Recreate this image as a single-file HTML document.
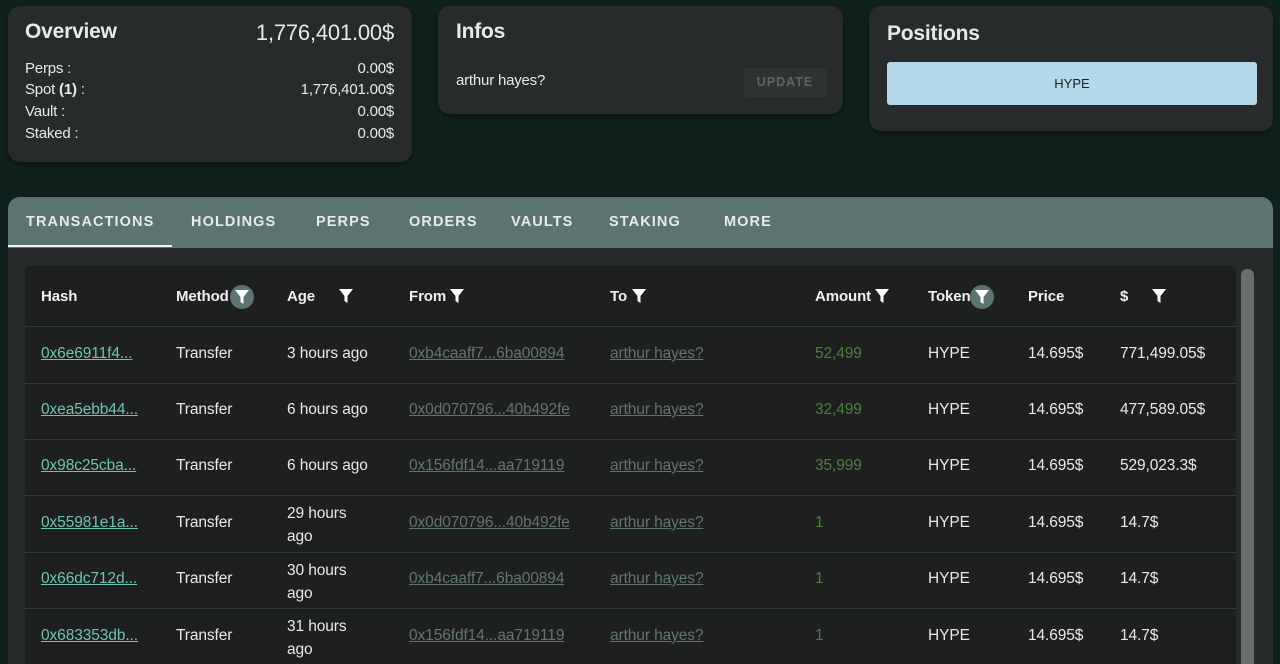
<!DOCTYPE html>
<html><head><meta charset="utf-8"><style>
*{box-sizing:border-box;margin:0;padding:0}
html,body{width:1280px;height:664px;overflow:hidden}
body{background:#0f201d;font-family:"Liberation Sans",sans-serif;color:#e8eaea;position:relative}
.card{position:absolute;background:#272b2b;border-radius:12px;box-shadow:0 2px 4px rgba(0,0,0,.4)}
.a{position:absolute;white-space:nowrap}
.h{font-size:21px;font-weight:bold;letter-spacing:-.2px}
.s{font-size:15px;letter-spacing:-.2px}
.tab{position:absolute;top:214px;font-size:14.5px;letter-spacing:1.1px;font-weight:bold;color:#e6eceb}
.c{position:absolute;font-size:15.5px;letter-spacing:-.1px;white-space:nowrap}
.hd{font-weight:bold;color:#f0f0f0;font-size:15px}
.lk{text-decoration:underline}
.hash{color:#6fc3b3}
.ad{color:#61766f}
.am{color:#4d7e3d}
.line{position:absolute;left:25px;width:1211px;height:1px;background:#333838}
.f{position:absolute;width:16px;height:18px}
</style></head><body>
<div class="card" style="left:8px;top:6px;width:404px;height:156px"></div>
<div class="a h" style="left:25px;top:20px">Overview</div>
<div class="a h" style="right:886px;top:20px;font-weight:normal;font-size:22px">1,776,401.00$</div>
<div class="a s" style="left:25px;top:60px">Perps :</div>
<div class="a s" style="left:25px;top:81px">Spot <b>(1)</b> :</div>
<div class="a s" style="left:25px;top:103px">Vault :</div>
<div class="a s" style="left:25px;top:125px">Staked :</div>
<div class="a s" style="right:886px;top:60px">0.00$</div>
<div class="a s" style="right:886px;top:81px">1,776,401.00$</div>
<div class="a s" style="right:886px;top:103px">0.00$</div>
<div class="a s" style="right:886px;top:125px">0.00$</div>

<div class="card" style="left:438px;top:6px;width:405px;height:108px"></div>
<div class="a h" style="left:456px;top:20px">Infos</div>
<div class="a s" style="left:456px;top:72px">arthur hayes?</div>
<div class="a" style="left:744px;top:68px;width:82px;height:29px;background:#2e3333;border-radius:3px;color:#5d6564;font-size:12.5px;letter-spacing:1px;text-align:center;line-height:29px;font-weight:bold">UPDATE</div>

<div class="card" style="left:869px;top:6px;width:404px;height:125px"></div>
<div class="a h" style="left:887px;top:22px">Positions</div>
<div class="a" style="left:887px;top:62px;width:370px;height:43px;background:#b3d8ea;border-radius:3px;color:#1a2228;font-size:13px;text-align:center;line-height:43px">HYPE</div>

<div class="a" style="left:8px;top:197px;width:1265px;height:467px;background:#262a2a;border-radius:12px 12px 0 0;overflow:hidden">
  <div style="position:absolute;left:0;top:0;width:100%;height:51px;background:#5b7471"></div>
  <div style="position:absolute;left:0;top:48px;width:164px;height:2px;background:#eef"></div>
  <div style="position:absolute;left:17px;top:69px;width:1211px;height:420px;background:#1e2020;border-radius:6px"></div>
  <div style="position:absolute;left:1233px;top:72px;width:13px;height:400px;background:#6b6e6e;border-radius:6px"></div>
</div>
<div class="tab" style="left:26px">TRANSACTIONS</div>
<div class="tab" style="left:191px">HOLDINGS</div>
<div class="tab" style="left:316px">PERPS</div>
<div class="tab" style="left:409px">ORDERS</div>
<div class="tab" style="left:511px">VAULTS</div>
<div class="tab" style="left:609px">STAKING</div>
<div class="tab" style="left:724px">MORE</div>

<svg width="0" height="0" style="position:absolute"><defs><symbol id="fi" viewBox="0 0 16 18"><path d="M1 2h14l-5.5 7v7l-3-2V9z" fill="#fff"/></symbol></defs></svg>

<div class="c hd" style="left:41px;top:288px">Hash</div>
<div class="c hd" style="left:176px;top:288px">Method</div>
<div style="position:absolute;left:230px;top:285px;width:24px;height:24px;border-radius:50%;background:#5b7471"></div>
<svg class="f" style="left:234px;top:288px"><use href="#fi"/></svg>
<div class="c hd" style="left:287px;top:288px">Age</div>
<svg class="f" style="left:338px;top:287px"><use href="#fi"/></svg>
<div class="c hd" style="left:409px;top:288px">From</div>
<svg class="f" style="left:449px;top:287px"><use href="#fi"/></svg>
<div class="c hd" style="left:610px;top:288px">To</div>
<svg class="f" style="left:631px;top:287px"><use href="#fi"/></svg>
<div class="c hd" style="left:815px;top:288px">Amount</div>
<svg class="f" style="left:874px;top:287px"><use href="#fi"/></svg>
<div class="c hd" style="left:928px;top:288px">Token</div>
<div style="position:absolute;left:970px;top:285px;width:24px;height:24px;border-radius:50%;background:#5b7471"></div>
<svg class="f" style="left:974px;top:288px"><use href="#fi"/></svg>
<div class="c hd" style="left:1028px;top:288px">Price</div>
<div class="c hd" style="left:1120px;top:288px">$</div>
<svg class="f" style="left:1151px;top:287px"><use href="#fi"/></svg>

<div class="line" style="top:326px"></div>
<div class="line" style="top:383px"></div>
<div class="line" style="top:439px"></div>
<div class="line" style="top:495px"></div>
<div class="line" style="top:552px"></div>
<div class="line" style="top:608px"></div>

<div class="c lk hash" style="left:41px;top:345px">0x6e6911f4...</div><div class="c" style="left:176px;top:345px">Transfer</div><div class="c" style="left:287px;top:345px">3 hours ago</div><div class="c lk ad" style="left:409px;top:345px">0xb4caaff7...6ba00894</div><div class="c lk ad" style="left:610px;top:345px">arthur hayes?</div><div class="c am" style="left:815px;top:345px">52,499</div><div class="c" style="left:928px;top:345px">HYPE</div><div class="c" style="left:1028px;top:345px">14.695$</div><div class="c" style="left:1120px;top:345px">771,499.05$</div>

<div class="c lk hash" style="left:41px;top:401px">0xea5ebb44...</div><div class="c" style="left:176px;top:401px">Transfer</div><div class="c" style="left:287px;top:401px">6 hours ago</div><div class="c lk ad" style="left:409px;top:401px">0x0d070796...40b492fe</div><div class="c lk ad" style="left:610px;top:401px">arthur hayes?</div><div class="c am" style="left:815px;top:401px">32,499</div><div class="c" style="left:928px;top:401px">HYPE</div><div class="c" style="left:1028px;top:401px">14.695$</div><div class="c" style="left:1120px;top:401px">477,589.05$</div>

<div class="c lk hash" style="left:41px;top:457px">0x98c25cba...</div><div class="c" style="left:176px;top:457px">Transfer</div><div class="c" style="left:287px;top:457px">6 hours ago</div><div class="c lk ad" style="left:409px;top:457px">0x156fdf14...aa719119</div><div class="c lk ad" style="left:610px;top:457px">arthur hayes?</div><div class="c am" style="left:815px;top:457px">35,999</div><div class="c" style="left:928px;top:457px">HYPE</div><div class="c" style="left:1028px;top:457px">14.695$</div><div class="c" style="left:1120px;top:457px">529,023.3$</div>

<div class="c lk hash" style="left:41px;top:514px">0x55981e1a...</div><div class="c" style="left:176px;top:514px">Transfer</div><div class="c" style="left:287px;top:502px;line-height:23px">29 hours<br>ago</div><div class="c lk ad" style="left:409px;top:514px">0x0d070796...40b492fe</div><div class="c lk ad" style="left:610px;top:514px">arthur hayes?</div><div class="c am" style="left:815px;top:514px">1</div><div class="c" style="left:928px;top:514px">HYPE</div><div class="c" style="left:1028px;top:514px">14.695$</div><div class="c" style="left:1120px;top:514px">14.7$</div>

<div class="c lk hash" style="left:41px;top:570px">0x66dc712d...</div><div class="c" style="left:176px;top:570px">Transfer</div><div class="c" style="left:287px;top:559px;line-height:23px">30 hours<br>ago</div><div class="c lk ad" style="left:409px;top:570px">0xb4caaff7...6ba00894</div><div class="c lk ad" style="left:610px;top:570px">arthur hayes?</div><div class="c am" style="left:815px;top:570px">1</div><div class="c" style="left:928px;top:570px">HYPE</div><div class="c" style="left:1028px;top:570px">14.695$</div><div class="c" style="left:1120px;top:570px">14.7$</div>

<div class="c lk hash" style="left:41px;top:627px">0x683353db...</div><div class="c" style="left:176px;top:627px">Transfer</div><div class="c" style="left:287px;top:615px;line-height:23px">31 hours<br>ago</div><div class="c lk ad" style="left:409px;top:627px">0x156fdf14...aa719119</div><div class="c lk ad" style="left:610px;top:627px">arthur hayes?</div><div class="c am" style="left:815px;top:627px">1</div><div class="c" style="left:928px;top:627px">HYPE</div><div class="c" style="left:1028px;top:627px">14.695$</div><div class="c" style="left:1120px;top:627px">14.7$</div>
</body></html>
